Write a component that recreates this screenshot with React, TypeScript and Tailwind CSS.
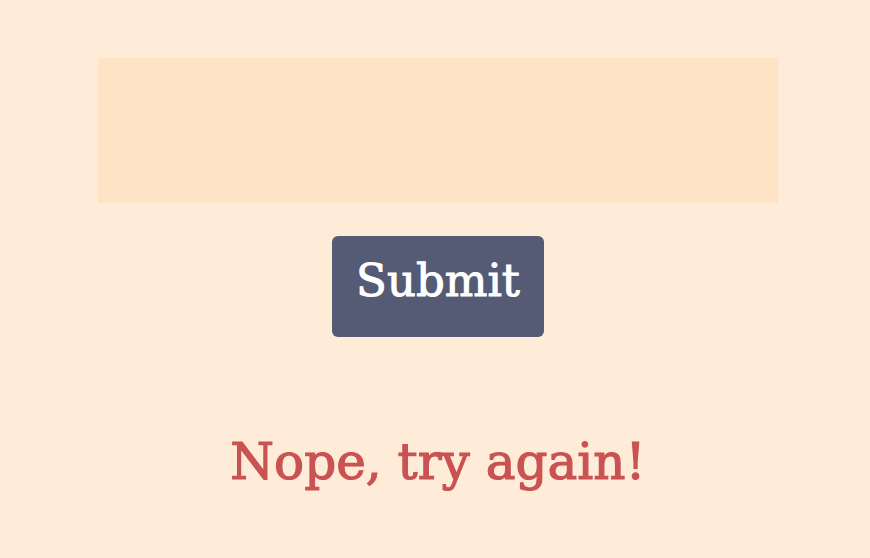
export default function App() {
    return (
        <div className="min-h-[558px] w-full bg-[#feecd8] flex flex-col items-center pl-[6px]" style={{ fontFamily: '"DejaVu Serif", serif' }}>
            <div className="mt-[58px] w-[680px] h-[145px] bg-[#fee4c4]" />
            <button className="mt-[33px] w-[212px] h-[101px] pb-[12px] rounded-md bg-[#565b75] text-white text-[45px] [-webkit-text-stroke:1px_#ffffff] flex items-center justify-center">
                Submit
            </button>
            <p className="mt-[100px] text-[50px] leading-none text-[#c95252] [-webkit-text-stroke:1.2px_#c95252]">Nope, try again!</p>
        </div>
    );
}
